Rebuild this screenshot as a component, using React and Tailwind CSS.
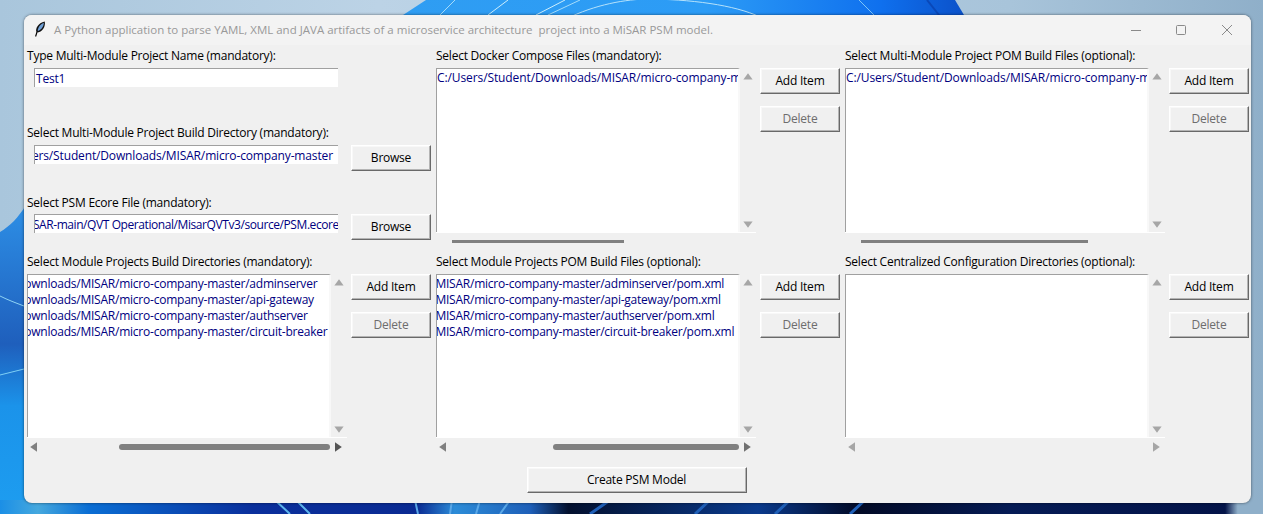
const Up = () => (
  <svg width="10" height="7" viewBox="0 0 10 7"><path d="M5 0.3 L9.6 6.6 L0.4 6.6 Z" fill="#a6a6a6" /></svg>
);
const Down = () => (
  <svg width="10" height="7" viewBox="0 0 10 7"><path d="M0.4 0.4 L9.6 0.4 L5 6.7 Z" fill="#a6a6a6" /></svg>
);
const Left = ({ color }) => (
  <svg width="7" height="10" viewBox="0 0 7 10"><path d="M7 0.2 L7 9.8 L0.2 5 Z" fill={color} /></svg>
);
const Right = ({ color }) => (
  <svg width="7" height="10" viewBox="0 0 7 10"><path d="M0 0.2 L6.8 5 L0 9.8 Z" fill={color} /></svg>
);

const Label = ({ children, className = "" }) => (
  <div className={`h-[19px] leading-[19px] whitespace-nowrap text-black ${className}`}>{children}</div>
);

const Button = ({ children, disabled, className = "" }) => (
  <div
    className={`flex items-center justify-center bg-[#f0f0f0] border border-t-white border-l-white border-r-[#696969] border-b-[#696969] shadow-[inset_-1px_-1px_0_#b4b4b4,inset_1px_1px_0_#f8f8f8] ${
      disabled ? "text-[#6d6d6d]" : "text-black"
    } ${className}`}
  >
    {children}
  </div>
);

const Entry = ({ text, offset }) => (
  <div className="w-[304px] h-[19px] bg-white border-t border-l border-[#a0a0a0] overflow-hidden ml-[7px]">
    <div className={`whitespace-nowrap leading-[19px] text-[#000080] ${offset}`}>{text}</div>
  </div>
);

const Listbox = ({ items, offset, height }) => (
  <div className={`w-[320px] flex border-b border-white ${height}`}>
    <div className="w-[304px] bg-white border-t border-l border-[#a0a0a0] border-r-2 border-r-[#f8f8f8] overflow-hidden pt-[1px]">
      {items.map((t) => (
        <div key={t} className={`whitespace-nowrap h-[16px] leading-[16px] text-[#000080] ${offset}`}>
          {t}
        </div>
      ))}
    </div>
    <div className="flex-1 flex flex-col items-center justify-between pt-[5px] pb-[4px]">
      <Up />
      <Down />
    </div>
  </div>
);

const Actions = () => (
  <div className="w-[80px] ml-[4px] flex flex-col gap-[12px]">
    <Button className="h-[26px]">Add Item</Button>
    <Button disabled className="h-[26px]">Delete</Button>
  </div>
);

const ThinThumb = ({ ml, w }) => (
  <div className="h-[16px] w-[320px] flex items-center">
    <div className={`h-[3px] bg-[#808080] ${ml} ${w}`} />
  </div>
);

const HBar = ({ thumb, l, r }) => (
  <div className="h-[17px] w-[320px] flex items-center">
    <div className="w-[17px] flex justify-start pl-[3px]"><Left color={l} /></div>
    <div className="w-[286px] flex items-center h-full">{thumb}</div>
    <div className="w-[17px] flex justify-center"><Right color={r} /></div>
  </div>
);

const base = "C:/Users/Student/Downloads/MISAR/micro-company-master";
const mods = ["adminserver", "api-gateway", "authserver", "circuit-breaker"];

function Wallpaper() {
  return (
    <svg className="absolute inset-0" width="1263" height="514" viewBox="0 0 1263 514">
      <defs>
        <linearGradient id="sky" x1="0" x2="1" y1="0" y2="0">
          <stop offset="0" stopColor="#a9c6dc" />
          <stop offset="0.3" stopColor="#bcd3e6" />
          <stop offset="0.8" stopColor="#a8c4da" />
          <stop offset="1" stopColor="#8fafc9" />
        </linearGradient>
        <linearGradient id="bloom" x1="0" x2="1" y1="0" y2="0">
          <stop offset="0" stopColor="#2f9df2" />
          <stop offset="0.55" stopColor="#2c9cf6" />
          <stop offset="0.85" stopColor="#0f70ee" />
          <stop offset="1" stopColor="#0b50c8" />
        </linearGradient>
        <linearGradient id="bottom" x1="0" x2="1" y1="0" y2="0">
          <stop offset="0" stopColor="#1b8fe6" />
          <stop offset="0.03" stopColor="#45a8de" />
          <stop offset="0.07" stopColor="#0a6ed4" />
          <stop offset="0.2" stopColor="#0a2f9c" />
          <stop offset="0.33" stopColor="#0a2a92" />
          <stop offset="0.36" stopColor="#2c8cd8" />
          <stop offset="0.42" stopColor="#1e5fb8" />
          <stop offset="0.45" stopColor="#03102e" />
          <stop offset="0.6" stopColor="#0a3a8c" />
          <stop offset="0.68" stopColor="#020a26" />
          <stop offset="0.8" stopColor="#051b55" />
          <stop offset="0.97" stopColor="#031348" />
          <stop offset="0.98" stopColor="#8fafc9" />
        </linearGradient>
        <linearGradient id="lower" x1="0" x2="0" y1="0" y2="1">
          <stop offset="0" stopColor="#2d8fe6" />
          <stop offset="0.45" stopColor="#1f5fbc" />
          <stop offset="0.65" stopColor="#1b93ea" />
          <stop offset="1" stopColor="#1d9df0" />
        </linearGradient>
      </defs>
      <rect width="1263" height="514" fill="url(#sky)" />
      <path d="M0 232 C10 226 18 218 26 205 L26 514 L0 514 Z" fill="url(#lower)" />
      <path d="M0 296 C8 300 16 303 24 306" stroke="#8fd4f5" strokeWidth="1" fill="none" />
      <path d="M0 375 L24 369" stroke="#7fd0f5" strokeWidth="1" fill="none" />
      <path d="M385 35 L403 15 L426 0 L955 0 L964 15 L968 35 Z" fill="url(#bloom)" />
      <path d="M455 0 L440 15 L425 35" stroke="#a5dcfa" strokeWidth="1" fill="none" />
      <path d="M508 0 L488 15 L470 35" stroke="#cdeefc" strokeWidth="1" fill="none" />
      <path d="M565 0 L536 15 L515 35" stroke="#cdeefc" strokeWidth="1" fill="none" />
      <path d="M580 0 L548 15 L525 35" stroke="#a5dcfa" strokeWidth="1" fill="none" />
      <path d="M560 22 C590 6 620 0 645 -1 C690 -1 735 5 760 17" stroke="#b5e2fb" strokeWidth="1" fill="none" />
      <path d="M859 0 L879 20" stroke="#7cc4f8" strokeWidth="1" fill="none" />
      <path d="M927 0 L943 20" stroke="#0a48b8" strokeWidth="2" fill="none" />
      <rect x="0" y="500" width="1263" height="14" fill="url(#bottom)" />
      <path d="M275 500 L290 514 M296 500 L310 514" stroke="#5db5ec" strokeWidth="2" fill="none" />
      <path d="M415 500 L418 514 M452 500 L450 514 M480 500 L476 514 M510 500 L500 514" stroke="#5aa8e8" strokeWidth="2" fill="none" />
      <path d="M610 500 L590 514 M710 500 L695 514 M790 500 L775 514 M865 500 L850 514" stroke="#2060b8" strokeWidth="3" fill="none" />
    </svg>
  );
}

export default function App() {
  return (
    <div className="relative w-[1263px] h-[514px] overflow-hidden pl-[24px] pt-[15px] text-[12px] tracking-[-0.23px] font-['Open_Sans',sans-serif]">
      <Wallpaper />
      <div className="relative w-[1227px] h-[488px] rounded-[8px] overflow-hidden bg-[#f0f0f0] shadow-[0_0_3px_rgba(0,0,0,0.55)]">
        {/* title bar */}
        <div className="h-[30px] bg-[#f3f3f3] flex items-center text-[#999999]">
          <svg className="ml-[10px] mb-[2px] shrink-0" width="12" height="16" viewBox="0 0 12 16">
            <path d="M1.6 15.5 L3 11" stroke="#000" strokeWidth="1.1" fill="none" />
            <path d="M2.6 11.5 C0.8 7.5 4 2 10.8 0.4 C11.6 5.5 8.6 11.2 2.6 11.5 Z" fill="#111" />
            <path d="M3.8 10 C3.6 7 6 3.4 9.8 1.8 C9.8 5 7.8 8.8 3.8 10 Z" fill="#6f9fd6" />
          </svg>
          <span className="ml-[8px] whitespace-pre text-[11.5px] tracking-[0px]">A Python application to parse YAML, XML and JAVA artifacts of a microservice architecture  project into a MiSAR PSM model.</span>
          <svg className="ml-auto mr-[18px] shrink-0" width="102" height="12" viewBox="0 0 102 12" fill="none" stroke="#8a8a8a" strokeWidth="1">
            <path d="M0 6.5 H10" />
            <rect x="45.5" y="1.5" width="9" height="9" rx="1" />
            <path d="M91 1 L101 11 M101 1 L91 11" />
          </svg>
        </div>

        <div className="pl-[3px] pt-[1px]">
          {/* top row */}
          <div className="flex h-[206px]">
            <div className="w-[409px]">
              <Label className="mb-[3px]">Type Multi-Module Project Name (mandatory):</Label>
              <Entry text="Test1" offset="pl-[1px]" />
              <Label className="mt-[36px] mb-[3px]">Select Multi-Module Project Build Directory (mandatory):</Label>
              <div className="flex h-[26px]">
                <Entry text={base} offset="-ml-[32px] tracking-[-0.14px]" />
                <Button className="w-[80px] h-[26px] ml-[13px]">Browse</Button>
              </div>
              <Label className="mt-[22px] mb-[2px]">Select PSM Ecore File (mandatory):</Label>
              <div className="flex h-[26px]">
                <Entry text="C:/Users/Student/Downloads/MISAR/MiSAR-main/QVT Operational/MisarQVTv3/source/PSM.ecore" offset="-ml-[208px] tracking-[-0.42px]" />
                <Button className="w-[80px] h-[26px] ml-[13px]">Browse</Button>
              </div>
            </div>
            <div className="w-[409px]">
              <Label className="mb-[3px]">Select Docker Compose Files (mandatory):</Label>
              <div className="flex">
                <div>
                  <Listbox height="h-[165px]" offset="tracking-[-0.1px]" items={[base + "/docker-compose.yml"]} />
                  <ThinThumb ml="ml-[16px]" w="w-[172px]" />
                </div>
                <Actions />
              </div>
            </div>
            <div className="w-[405px]">
              <Label className="mb-[3px]">Select Multi-Module Project POM Build Files (optional):</Label>
              <div className="flex">
                <div>
                  <Listbox height="h-[165px]" offset="tracking-[-0.1px]" items={[base + "/pom.xml"]} />
                  <ThinThumb ml="ml-[16px]" w="w-[227px]" />
                </div>
                <Actions />
              </div>
            </div>
          </div>

          {/* bottom row */}
          <div className="flex">
            <div className="w-[409px]">
              <Label className="mb-[3px]">Select Module Projects Build Directories (mandatory):</Label>
              <div className="flex">
                <div>
                  <Listbox height="h-[164px]" offset="-ml-[108px]" items={mods.map((m) => `${base}/${m}`)} />
                  <HBar l="#808080" r="#555555" thumb={<div className="h-[6px] rounded-[3px] bg-[#808080] ml-[75px] w-[211px]" />} />
                </div>
                <Actions />
              </div>
            </div>
            <div className="w-[409px]">
              <Label className="mb-[3px]">Select Module Projects POM Build Files (optional):</Label>
              <div className="flex">
                <div>
                  <Listbox height="h-[164px]" offset="-ml-[162px]" items={mods.map((m) => `${base}/${m}/pom.xml`)} />
                  <HBar l="#808080" r="#707070" thumb={<div className="h-[6px] rounded-[3px] bg-[#808080] ml-[100px] w-[186px]" />} />
                </div>
                <Actions />
              </div>
            </div>
            <div className="w-[405px]">
              <Label className="mb-[3px]">Select Centralized Configuration Directories (optional):</Label>
              <div className="flex">
                <div>
                  <Listbox height="h-[164px]" offset="" items={[]} />
                  <HBar l="#a6a6a6" r="#a6a6a6" thumb={null} />
                </div>
                <Actions />
              </div>
            </div>
          </div>

          <div className="flex justify-center mt-[12px] pr-[5px]">
            <Button className="w-[220px] h-[26px]">Create PSM Model</Button>
          </div>
        </div>
      </div>
    </div>
  );
}
